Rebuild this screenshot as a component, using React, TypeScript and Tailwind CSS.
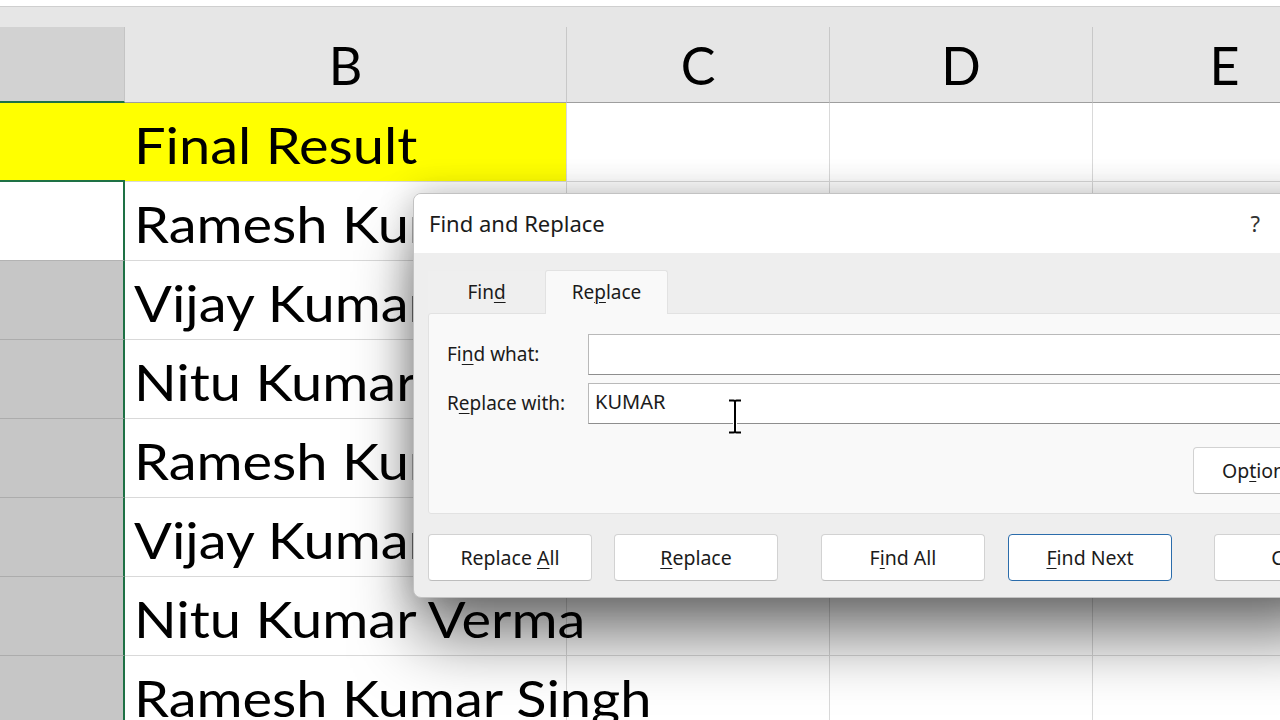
import React from "react"

function U({ children }: { children: React.ReactNode }) {
  return <span className="underline decoration-1 underline-offset-[3px]">{children}</span>
}

const names = [
  "Final Result",
  "Ramesh Kumar Singh",
  "Vijay Kumar Sharma",
  "Nitu Kumar Verma",
  "Ramesh Kumar Singh",
  "Vijay Kumar Sharma",
  "Nitu Kumar Verma",
  "Ramesh Kumar Singh",
]

function SheetRow({ text, index }: { text: string; index: number }) {
  const first = index === 0
  const active = index === 1
  const colA = first
    ? "bg-[#ffff00] border-b-2 border-[#1e7145]"
    : active
      ? "bg-white border-r-2 border-b border-r-[#1e7145] border-b-[#b3b3b3]"
      : "bg-[#c6c6c6] border-r-2 border-b border-r-[#1e7145] border-b-[#acacac]"
  return (
    <div className="flex h-[79px] shrink-0">
      <div className={`w-[125px] h-full shrink-0 ${colA}`} />
      <div
        className={`w-[442px] h-full shrink-0 flex items-center pl-[9px] pt-[6px] whitespace-nowrap border-b border-r border-[#d9d9d9] ${
          first ? "bg-[#ffff00]" : ""
        }`}
      >
        <span className="inline-block origin-left scale-x-[1.12]">{text}</span>
      </div>
      <div className="w-[263px] h-full shrink-0 border-b border-r border-[#d9d9d9]" />
      <div className="w-[263px] h-full shrink-0 border-b border-r border-[#d9d9d9]" />
      <div className="flex-1 h-full border-b border-[#d9d9d9]" />
    </div>
  )
}

function DialogButton({
  children,
  primary = false,
  className = "",
}: {
  children: React.ReactNode
  primary?: boolean
  className?: string
}) {
  return (
    <div
      className={`w-[164px] h-[47px] shrink-0 flex items-center justify-center rounded-[4px] bg-white text-[19.5px] ${
        primary ? "border border-[#2a6cab]" : "border border-[#d2d2d2] border-b-[#bdbdbd]"
      } ${className}`}
    >
      <span className="whitespace-nowrap">{children}</span>
    </div>
  )
}

export default function App() {
  return (
    <div className="relative w-[1280px] h-[720px] overflow-hidden bg-white font-['Lato',sans-serif] text-black">
      {/* top strip */}
      <div className="h-[7px] bg-white border-b border-[#cfcfcf]" />
      <div className="h-[20px] bg-[#e6e6e6]" />

      {/* column headers */}
      <div className="flex h-[76px] text-[52px] leading-none">
        <div className="w-[125px] shrink-0 bg-[#d2d2d2] border-b-2 border-[#1e7145] border-r border-r-[#c4c4c4]" />
        <div className="w-[442px] shrink-0 bg-[#e6e6e6] flex items-center justify-center border-r border-b border-[#9e9e9e] border-r-[#c8c8c8]">B</div>
        <div className="w-[263px] shrink-0 bg-[#e6e6e6] flex items-center justify-center border-r border-b border-[#9e9e9e] border-r-[#c8c8c8]">C</div>
        <div className="w-[263px] shrink-0 bg-[#e6e6e6] flex items-center justify-center border-r border-b border-[#9e9e9e] border-r-[#c8c8c8]">D</div>
        <div className="w-[263px] shrink-0 bg-[#e6e6e6] flex items-center justify-center border-b border-[#9e9e9e]">E</div>
      </div>

      {/* cells */}
      <div className="flex flex-col text-[50px] leading-none">
        {names.map((n, i) => (
          <SheetRow key={i} text={n} index={i} />
        ))}
      </div>

      {/* Find and Replace dialog */}
      <div className="absolute left-[413px] top-[193px] w-[920px] h-[405px] rounded-[8px] border border-[#c2c2c2] bg-[#eeeeee] overflow-hidden shadow-[0_44px_64px_-4px_rgba(0,0,0,0.52),0_0_34px_rgba(0,0,0,0.24)] font-['Noto_Sans',sans-serif] text-[#1b1b1b]">
        <div className="h-[59px] bg-white flex items-center pl-[15px]">
          <span className="text-[22px]">Find and Replace</span>
          <span className="ml-auto mr-[72px] text-[22px] text-[#333]">?</span>
        </div>

        <div className="pt-[16px] pl-[14px]">
          {/* tabs */}
          <div className="flex items-end h-[44px] text-[19px]">
            <div className="w-[117px] h-[42px] flex items-center justify-center bg-[#efefef]">
              <span>
                Fin<U>d</U>
              </span>
            </div>
            <div className="w-[123px] h-[44px] flex items-center justify-center bg-[#f9f9f9] border border-b-0 border-[#e2e2e2] rounded-t-[3px] relative top-px">
              <span>
                Re<U>p</U>lace
              </span>
            </div>
          </div>

          {/* panel */}
          <div className="h-[201px] w-[900px] bg-[#f9f9f9] border border-[#e2e2e2] rounded-[3px] pt-[20px] pl-[18px] text-[19px]">
            <div className="flex items-center h-[41px]">
              <div className="w-[141px] shrink-0">
                Fi<U>n</U>d what:
              </div>
              <div className="flex-1 h-full bg-white border border-[#b9b9b9] border-b-[#8e8e8e]" />
            </div>
            <div className="flex items-center h-[41px] mt-[8px]">
              <div className="w-[141px] shrink-0">
                R<U>e</U>place with:
              </div>
              <div className="flex-1 h-full bg-white border border-[#b9b9b9] border-b-[#8e8e8e] flex items-center pl-[6px] pb-[3px] text-[20px]">
                KUMAR
              </div>
            </div>
            <DialogButton className="ml-[746px] mt-[23px] !justify-start pl-[28px]">
              Op<U>t</U>ions &gt;&gt;
            </DialogButton>
          </div>

          {/* buttons */}
          <div className="flex mt-[20px]">
            <DialogButton>
              Replace <U>A</U>ll
            </DialogButton>
            <DialogButton className="ml-[22px]">
              <U>R</U>eplace
            </DialogButton>
            <DialogButton className="ml-[43px]">
              F<U>i</U>nd All
            </DialogButton>
            <DialogButton primary className="ml-[23px]">
              <U>F</U>ind Next
            </DialogButton>
            <DialogButton className="ml-[42px]">Close</DialogButton>
          </div>
        </div>
      </div>

      {/* I-beam text cursor */}
      <svg className="absolute left-[726px] top-[398px]" width="18" height="37" viewBox="0 0 18 37">
        <path
          d="M3 2.5h4.5c1 0 1.5.8 1.5 1.5v29c0 .8-.5 1.5-1.5 1.5H3M15 2.5h-4.5c-1 0-1.5.8-1.5 1.5M9 33c0 .8.5 1.5 1.5 1.5H15"
          stroke="white"
          strokeWidth="4"
          fill="none"
        />
        <path
          d="M3 2.5h4.5c1 0 1.5.8 1.5 1.5v29c0 .8-.5 1.5-1.5 1.5H3M15 2.5h-4.5c-1 0-1.5.8-1.5 1.5M9 33c0 .8.5 1.5 1.5 1.5H15"
          stroke="black"
          strokeWidth="2"
          fill="none"
        />
      </svg>
    </div>
  )
}
